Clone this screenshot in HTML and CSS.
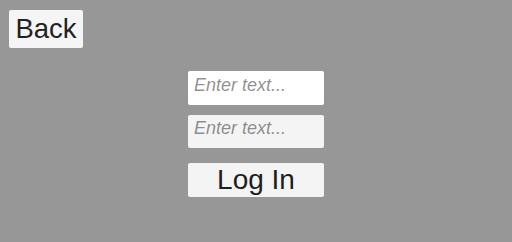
FILE: index.html
```html
<!DOCTYPE html>
<html>
<head>
<meta charset="utf-8">
<link rel="stylesheet" href="styles.css">
</head>
<body>
<div class="page">
  <header class="top">
    <button class="back">Back</button>
  </header>
  <form class="login">
    <input class="field" type="text" placeholder="Enter text...">
    <input class="field field-alt" type="password" placeholder="Enter text...">
    <button class="submit" type="button">Log In</button>
  </form>
</div>
</body>
</html>
```
FILE: styles.css
```css
html, body {
  margin: 0;
  padding: 0;
  background: #979797;
}
.page {
  width: 512px;
  height: 242px;
  display: flex;
  flex-direction: column;
  font-family: "Liberation Sans", Arial, sans-serif;
}
.top {
  display: flex;
  padding: 10px 0 0 9px;
}
.back {
  width: 74px;
  height: 38px;
  margin: 0;
  padding: 0;
  border: none;
  border-radius: 2px;
  background: #f5f5f5;
  color: #222;
  font-family: inherit;
  font-size: 27.5px;
  line-height: 38px;
  text-align: center;
}
.login {
  display: flex;
  flex-direction: column;
  align-items: center;
  margin: 23px 0 0 0;
}
.field {
  box-sizing: border-box;
  width: 136px;
  height: 34px;
  margin: 0 0 10px 0;
  padding: 0 5px 6px 6px;
  border: none;
  border-radius: 2px;
  background: #ffffff;
  color: #323232;
  font-family: inherit;
  font-size: 18px;
  outline: none;
}
.field::placeholder {
  color: rgba(50, 50, 50, 0.55);
  font-style: italic;
}
.field-alt {
  height: 33px;
  background: #f4f4f4;
  margin-bottom: 15px;
}
.submit {
  width: 136px;
  height: 34px;
  margin: 0;
  padding: 0;
  border: none;
  border-radius: 2px;
  background: #f4f4f4;
  color: #1e1e1e;
  font-family: inherit;
  font-size: 28px;
  line-height: 34px;
  text-align: center;
}
```
